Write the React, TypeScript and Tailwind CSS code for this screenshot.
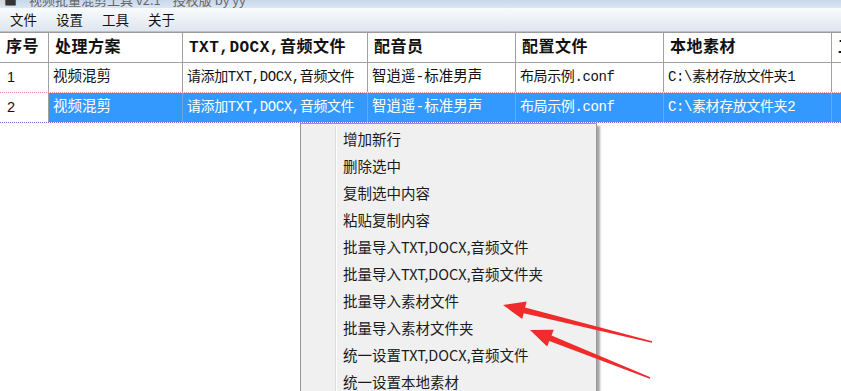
import React from "react";

const cjk = '"Noto Sans CJK SC", "Noto Sans", sans-serif';
const song = '"Liberation Mono", "Noto Sans CJK SC", monospace';

const cols = [49, 134, 185, 148, 148, 168, 20];

const header = ["序号", "处理方案", "TXT,DOCX,音频文件", "配音员", "配置文件", "本地素材", "工"];

const rows = [
  ["1", "视频混剪", "请添加TXT,DOCX,音频文件", "智逍遥-标准男声", "布局示例.conf", "C:\\素材存放文件夹1", ""],
  ["2", "视频混剪", "请添加TXT,DOCX,音频文件", "智逍遥-标准男声", "布局示例.conf", "C:\\素材存放文件夹2", ""],
];

const menuItems = [
  "增加新行",
  "删除选中",
  "复制选中内容",
  "粘贴复制内容",
  "批量导入TXT,DOCX,音频文件",
  "批量导入TXT,DOCX,音频文件夹",
  "批量导入素材文件",
  "批量导入素材文件夹",
  "统一设置TXT,DOCX,音频文件",
  "统一设置本地素材",
];

function Arrows() {
  return (
    <svg className="absolute left-0 top-0 pointer-events-none" width="841" height="391">
      <polygon
        fill="#ef2b2b"
        points="503,305 526.6,301.6 525.1,307.4 652.2,341.3 651.8,342.7 523.7,313.2 522.2,319"
      />
      <polygon
        fill="#ef2b2b"
        points="530,330 553.8,329.8 551.5,335.4 650.3,377.3 649.7,378.7 549.3,341 547.1,346.6"
      />
    </svg>
  );
}

export default function App() {
  return (
    <div className="relative w-[841px] h-[391px] overflow-hidden bg-white text-[#111]" style={{ fontFamily: cjk }}>
      {/* title bar, cut off at the top */}
      <div className="h-[8px] overflow-hidden bg-gradient-to-b from-[#c8d8ea] to-[#dbe6f2]">
        <div className="-mt-[10px] flex items-center gap-3 pl-1 text-[13px] text-[#666]">
          <span className="text-[#333]">■</span>
          <span>视频批量混剪工具 v2.1</span>
          <span>授权版 by yy</span>
        </div>
      </div>

      {/* menu bar */}
      <div className="h-[24px] flex items-center gap-[19px] pl-[10px] text-[13.5px] bg-gradient-to-b from-[#f9fbfd] to-[#dfe6ef] border-b border-[#b9c2cc]">
        <span>文件</span>
        <span>设置</span>
        <span>工具</span>
        <span>关于</span>
      </div>

      {/* table */}
      <div className="border-t border-[#9a9a9a]">
        <div className="flex h-[30px] border-b border-[#a0a0a0]">
          {header.map((h, i) => (
            <div
              key={i}
              className="shrink-0 flex items-center px-[6px] border-r border-[#a0a0a0] font-bold text-[16px] tracking-[0.5px] overflow-hidden whitespace-nowrap"
              style={{ width: cols[i], fontFamily: song }}
            >
              {h}
            </div>
          ))}
        </div>
        {rows.map((r, ri) => {
          const sel = ri === 1;
          return (
            <div
              key={ri}
              className={
                "flex h-[30px] border-b border-dotted " +
                (sel ? "border-[#7a6fd0]" : "border-[#e08a9a]")
              }
            >
              {r.map((c, i) => {
                const blue = sel && i > 0;
                return (
                  <div
                    key={i}
                    className={
                      "shrink-0 flex items-center border-r text-[14.5px] overflow-hidden whitespace-nowrap " +
                      (i === 0 ? "px-[7px] " : "px-[4px] ") +
                      (blue ? "bg-[#3399ff] text-white border-[#6fa8e0]" : "bg-white text-[#111] border-[#a0a0a0]")
                    }
                    style={{ width: cols[i], fontFamily: i === 0 ? '"Liberation Sans", sans-serif' : song }}
                  >
                    <span className={i === 2 || i >= 4 ? "text-[14px] tracking-[-0.4px]" : ""}>{c}</span>
                  </div>
                );
              })}
            </div>
          );
        })}
      </div>

      {/* context menu */}
      <div className="absolute left-[300px] top-[123px] w-[297px] h-[290px] bg-[#f0f0f0] border border-[#979797] shadow-[3px_3px_2px_rgba(0,0,0,0.35)] pt-[1px]">
        <div className="absolute left-[34px] top-[2px] bottom-0 w-[2px] border-l border-[#dcdcdc] border-r-white border-r" />
        {menuItems.map((m) => (
          <div key={m} className="h-[27px] flex items-center pl-[42px] text-[14.5px] text-[#1a1a1a]" style={{ fontFamily: cjk }}>
            {m}
          </div>
        ))}
      </div>

      <Arrows />
    </div>
  );
}
